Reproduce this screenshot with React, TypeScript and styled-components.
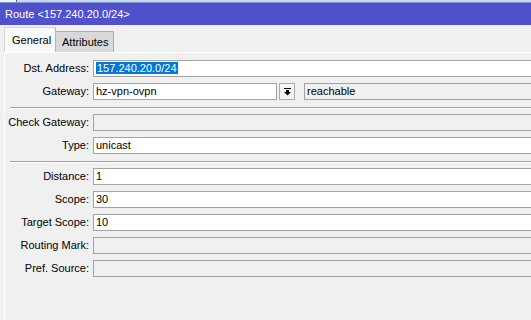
import React from "react";
import styled, { createGlobalStyle } from "styled-components";

const GlobalStyle = createGlobalStyle`
  html, body {
    margin: 0;
    padding: 0;
    background: #f0f0f0;
    overflow: hidden;
  }
  body {
    font-family: "Liberation Sans", Arial, sans-serif;
    font-size: 11px;
    color: #000;
  }
`;

const Window = styled.div`
  width: 531px;
  height: 320px;
  overflow: hidden;
  display: flex;
  flex-direction: column;
  background: #f0f0f0;
`;

const TopStrip = styled.div`
  height: 2px;
  display: flex;
  border-bottom: 1px solid #7d97cf;
`;

const StripLeft = styled.div`
  width: 16px;
  background: #f4f4f4;
  border-right: 1px solid #5a5a6a;
`;

const StripRight = styled.div`
  flex: 1;
  background: #c9d6ee;
`;

const TitleBar = styled.div`
  height: 22px;
  background: #5150cd;
  color: #fff;
  display: flex;
  align-items: center;
  padding-left: 5px;
  font-size: 11px;
`;

const TabRow = styled.div`
  height: 27px;
  display: flex;
  align-items: flex-end;
  padding-left: 4px;
`;

const Tab = styled.div<{ $active?: boolean }>`
  box-sizing: border-box;
  height: ${(p) => (p.$active ? "25px" : "21px")};
  width: ${(p) => (p.$active ? "52px" : "58px")};
  padding-left: ${(p) => (p.$active ? "7px" : "6px")};
  padding-top: ${(p) => (p.$active ? "6px" : "4px")};
  background: ${(p) => (p.$active ? "#f9f9f9" : "#d9d9d9")};
  border: 1px solid ${(p) => (p.$active ? "#d6d6d6" : "#adadad")};
  border-bottom: none;
  ${(p) => (p.$active ? "border-right-color: #b5b5b5;" : "border-left: none;")}
  font-size: 11px;
  line-height: 13px;
  white-space: nowrap;
`;

const Panel = styled.div`
  flex: 1;
  margin-left: 4px;
  margin-right: -30px;
  border-left: 1px solid #fff;
  border-top: 1px solid #fff;
`;

const Form = styled.div`
  display: grid;
  grid-template-columns: 84px 1fr;
  column-gap: 4px;
  row-gap: 6px;
  padding-top: 7px;
`;

const Label = styled.div`
  height: 17px;
  line-height: 17px;
  text-align: right;
  white-space: nowrap;
  font-size: 11px;
`;

const Field = styled.div<{ $disabled?: boolean }>`
  box-sizing: border-box;
  height: 17px;
  border: 1px solid #a3a3a3;
  background: ${(p) => (p.$disabled ? "#f0f0f0" : "#fff")};
  padding-left: 2px;
  line-height: 15px;
  font-size: 11px;
  white-space: nowrap;
  overflow: hidden;
  flex: 1;
`;

const Selected = styled.span`
  background: #0078d7;
  color: #fff;
  padding: 0 1px 0 1px;
  margin-left: 0px;
`;

const FieldGroup = styled.div`
  display: flex;
  align-items: stretch;
`;

const GatewayInput = styled(Field)`
  flex: 0 0 184px;
`;

const DropButton = styled.div`
  box-sizing: border-box;
  width: 16px;
  height: 17px;
  margin-left: 2px;
  margin-right: 9px;
  border: 1px solid #adadad;
  background: #f4f4f4;
  display: flex;
  align-items: center;
  justify-content: center;
`;

const Separator = styled.div`
  grid-column: 1 / -1;
  margin: 1px 0 -1px 5px;
  border-top: 1px solid #a0a0a0;
  border-bottom: 1px solid #fff;
`;

const DropIcon = () => (
  <svg width="7" height="8" viewBox="0 0 7 8" aria-hidden>
    <rect x="0" y="0" width="7" height="1" fill="#000" />
    <rect x="2" y="2" width="3" height="2" fill="#000" />
    <polygon points="0,4 7,4 3.5,7.5" fill="#000" />
  </svg>
);

export default function App() {
  return (
    <>
      <GlobalStyle />
      <Window>
        <TopStrip>
          <StripLeft />
          <StripRight />
        </TopStrip>
        <TitleBar>Route &lt;157.240.20.0/24&gt;</TitleBar>
        <TabRow>
          <Tab $active>General</Tab>
          <Tab>Attributes</Tab>
        </TabRow>
        <Panel>
          <Form>
            <Label>Dst. Address:</Label>
            <Field>
              <Selected>157.240.20.0/24</Selected>
            </Field>

            <Label>Gateway:</Label>
            <FieldGroup>
              <GatewayInput>hz-vpn-ovpn</GatewayInput>
              <DropButton>
                <DropIcon />
              </DropButton>
              <Field $disabled>reachable</Field>
            </FieldGroup>

            <Separator />

            <Label>Check Gateway:</Label>
            <Field $disabled />

            <Label>Type:</Label>
            <Field>unicast</Field>

            <Separator />

            <Label>Distance:</Label>
            <Field>1</Field>

            <Label>Scope:</Label>
            <Field>30</Field>

            <Label>Target Scope:</Label>
            <Field>10</Field>

            <Label>Routing Mark:</Label>
            <Field $disabled />

            <Label>Pref. Source:</Label>
            <Field $disabled />
          </Form>
        </Panel>
      </Window>
    </>
  );
}
